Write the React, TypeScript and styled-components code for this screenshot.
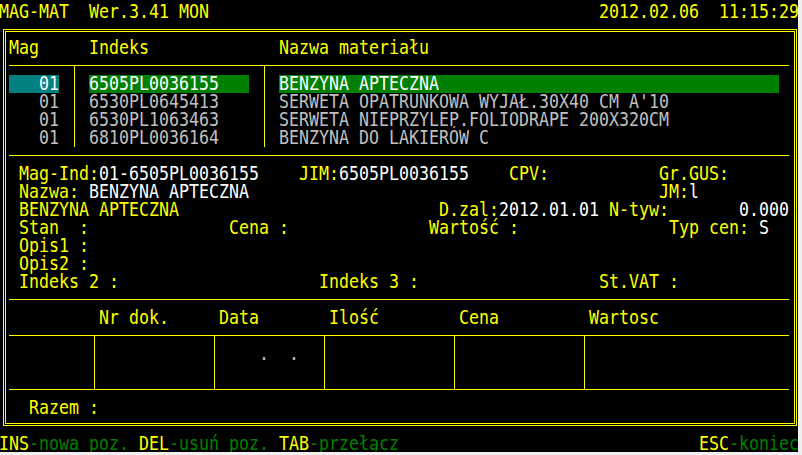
import React from "react";
import styled, { createGlobalStyle } from "styled-components";

const C = {
  yellow: "#ffff00",
  white: "#ffffff",
  gray: "#c0c0c0",
  green: "#008000",
  cyan: "#008080",
};

const tones = {
  label: C.yellow,
  value: C.white,
  data: C.gray,
  hint: C.green,
};
type Tone = keyof typeof tones;

const sp = (n: number) => " ".repeat(n);

const Global = createGlobalStyle`
  html, body { margin: 0; padding: 0; background: #f0f0f0; }
  #root { width: 802px; height: 455px; }
`;

const Screen = styled.div`
  width: 798px;
  height: 452px;
  background: #000;
  overflow: hidden;
  box-sizing: border-box;
  padding-top: 3px;
  font-family: "DejaVu Sans Mono", monospace;
  font-size: 16.61px;
  font-kerning: none;
  font-variant-ligatures: none;
  color: ${C.yellow};
`;

const Term = styled.div`
  width: 800px;
  margin-left: -1px;
`;

const Line = styled.div<{ $cols?: number; $bg?: string }>`
  height: 18px;
  line-height: 18px;
  white-space: pre;
  width: ${(p) => (p.$cols ? `${p.$cols * 10}px` : "auto")};
  background: ${(p) => p.$bg ?? "transparent"};
`;

const Glyphs = styled.span`
  display: inline-block;
  vertical-align: top;
  transform: scaleY(1.12);
  transform-origin: 50% 50%;
`;

const Tx = styled.span<{ $tone: Tone }>`
  color: ${(p) => tones[p.$tone]};
`;

const Bar = styled.div`
  display: flex;
  justify-content: space-between;
  height: 18px;
  line-height: 18px;
  white-space: pre;
`;

const Frame = styled.div`
  box-sizing: border-box;
  margin: 8px 0 0 4px;
  width: 794px;
  height: 397px;
  border: 3px double ${C.yellow};
  padding: 7px 0 0 3px;
`;

const Panel = styled.div`
  width: 780px;
`;

const List = styled.div`
  display: flex;
  margin-top: 8px;
  border-top: 1px solid ${C.yellow};
`;

const ListCol = styled.div<{ $w: number; $pl: number; $sep?: boolean }>`
  box-sizing: border-box;
  width: ${(p) => p.$w}px;
  padding: 9px 0 0 ${(p) => p.$pl}px;
  border-right: ${(p) => (p.$sep ? `1px solid ${C.yellow}` : "none")};
`;

const Section = styled.div`
  margin-top: 8px;
  border-top: 1px solid ${C.yellow};
  padding-top: 9px;
`;

const TableBody = styled.div`
  display: flex;
  margin-top: 8px;
  border-top: 1px solid ${C.yellow};
  border-bottom: 1px solid ${C.yellow};
`;

const TableCol = styled.div<{ $w: number; $pl?: number; $last?: boolean }>`
  box-sizing: border-box;
  width: ${(p) => p.$w}px;
  height: 53px;
  padding: 9px 0 0 ${(p) => p.$pl ?? 0}px;
  border-right: ${(p) => (p.$last ? "none" : `1px solid ${C.yellow}`)};
`;

const Summary = styled.div`
  margin-top: 9px;
`;

const Footer = styled(Bar)`
  margin-top: 9px;
`;

const items = [
  { mag: "   01", idx: "6505PL0036155", name: "BENZYNA APTECZNA", sel: true },
  { mag: "   01", idx: "6530PL0645413", name: "SERWETA OPATRUNKOWA WYJAŁ.30X40 CM A'10" },
  { mag: "   01", idx: "6530PL1063463", name: "SERWETA NIEPRZYLEP.FOLIODRAPE 200X320CM" },
  { mag: "   01", idx: "6810PL0036164", name: "BENZYNA DO LAKIERÓW C" },
];

const tableCols = [86, 120, 110, 130, 130, 204];

export default function App() {
  return (
    <>
      <Global />
      <Screen>
        <Term>
          <Bar>
            <Glyphs>MAG-MAT  Wer.3.41 MON</Glyphs>
            <Glyphs>2012.02.06  11:15:29</Glyphs>
          </Bar>

          <Frame>
            <Panel>
              <Line>
                <Glyphs>{"Mag" + sp(5) + "Indeks" + sp(13) + "Nazwa materiału"}</Glyphs>
              </Line>

              <List>
                <ListCol $w={66} $pl={0} $sep>
                  {items.map((it, i) => (
                    <Line key={i} $cols={5} $bg={it.sel ? C.cyan : undefined}>
                      <Glyphs>
                        <Tx $tone={it.sel ? "value" : "data"}>{it.mag}</Tx>
                      </Glyphs>
                    </Line>
                  ))}
                </ListCol>
                <ListCol $w={190} $pl={14} $sep>
                  {items.map((it, i) => (
                    <Line key={i} $cols={16} $bg={it.sel ? C.green : undefined}>
                      <Glyphs>
                        <Tx $tone={it.sel ? "value" : "data"}>{it.idx}</Tx>
                      </Glyphs>
                    </Line>
                  ))}
                </ListCol>
                <ListCol $w={524} $pl={14}>
                  {items.map((it, i) => (
                    <Line key={i} $cols={50} $bg={it.sel ? C.green : undefined}>
                      <Glyphs>
                        <Tx $tone={it.sel ? "value" : "data"}>{it.name}</Tx>
                      </Glyphs>
                    </Line>
                  ))}
                </ListCol>
              </List>

              <Section>
                <Line>
                  <Glyphs>
                    <Tx $tone="label">{" Mag-Ind:"}</Tx>
                    <Tx $tone="value">01-6505PL0036155</Tx>
                    <Tx $tone="label">{sp(4) + "JIM:"}</Tx>
                    <Tx $tone="value">6505PL0036155</Tx>
                    <Tx $tone="label">{sp(4) + "CPV:" + sp(11) + "Gr.GUS:"}</Tx>
                  </Glyphs>
                </Line>
                <Line>
                  <Glyphs>
                    <Tx $tone="label">{" Nazwa: "}</Tx>
                    <Tx $tone="value">BENZYNA APTECZNA</Tx>
                    <Tx $tone="label">{sp(41) + "JM:"}</Tx>
                    <Tx $tone="value">l</Tx>
                  </Glyphs>
                </Line>
                <Line>
                  <Glyphs>
                    <Tx $tone="label">{" BENZYNA APTECZNA" + sp(26) + "D.zal:"}</Tx>
                    <Tx $tone="value">2012.01.01</Tx>
                    <Tx $tone="label">{" N-tyw:"}</Tx>
                    <Tx $tone="value">{sp(7) + "0.000"}</Tx>
                  </Glyphs>
                </Line>
                <Line>
                  <Glyphs>
                    <Tx $tone="label">
                      {" Stan  :" + sp(14) + "Cena :" + sp(14) + "Wartość :" + sp(15) + "Typ cen:"}
                    </Tx>
                    <Tx $tone="value">{" S"}</Tx>
                  </Glyphs>
                </Line>
                <Line>
                  <Glyphs>{" Opis1 :"}</Glyphs>
                </Line>
                <Line>
                  <Glyphs>{" Opis2 :"}</Glyphs>
                </Line>
                <Line>
                  <Glyphs>{" Indeks 2 :" + sp(20) + "Indeks 3 :" + sp(18) + "St.VAT :"}</Glyphs>
                </Line>
              </Section>

              <Section>
                <Line>
                  <Glyphs>
                    {sp(9) + "Nr dok." + sp(5) + "Data" + sp(7) + "Ilość" + sp(8) + "Cena" + sp(9) + "Wartosc"}
                  </Glyphs>
                </Line>
              </Section>

              <TableBody>
                {tableCols.map((w, i) => (
                  <TableCol key={i} $w={w} $pl={i === 2 ? 4 : 0} $last={i === tableCols.length - 1}>
                    {i === 2 && (
                      <Line>
                        <Glyphs>
                          <Tx $tone="data">{"    .  ."}</Tx>
                        </Glyphs>
                      </Line>
                    )}
                  </TableCol>
                ))}
              </TableBody>

              <Summary>
                <Line>
                  <Glyphs>{"  Razem :"}</Glyphs>
                </Line>
              </Summary>
            </Panel>
          </Frame>

          <Footer>
            <Glyphs>
              <Tx $tone="label">INS</Tx>
              <Tx $tone="hint">{"-nowa poz. "}</Tx>
              <Tx $tone="label">DEL</Tx>
              <Tx $tone="hint">{"-usuń poz. "}</Tx>
              <Tx $tone="label">TAB</Tx>
              <Tx $tone="hint">-przełącz</Tx>
            </Glyphs>
            <Glyphs>
              <Tx $tone="label">ESC</Tx>
              <Tx $tone="hint">-koniec</Tx>
            </Glyphs>
          </Footer>
        </Term>
      </Screen>
    </>
  );
}
